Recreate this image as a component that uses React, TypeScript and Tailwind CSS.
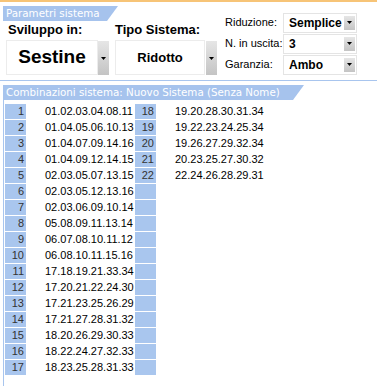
import React from 'react';

const rows: { n: number; combo: string; n2?: number; combo2?: string }[] = [
  { n: 1, combo: '01.02.03.04.08.11', n2: 18, combo2: '19.20.28.30.31.34' },
  { n: 2, combo: '01.04.05.06.10.13', n2: 19, combo2: '19.22.23.24.25.34' },
  { n: 3, combo: '01.04.07.09.14.16', n2: 20, combo2: '19.26.27.29.32.34' },
  { n: 4, combo: '01.04.09.12.14.15', n2: 21, combo2: '20.23.25.27.30.32' },
  { n: 5, combo: '02.03.05.07.13.15', n2: 22, combo2: '22.24.26.28.29.31' },
  { n: 6, combo: '02.03.05.12.13.16' },
  { n: 7, combo: '02.03.06.09.10.14' },
  { n: 8, combo: '05.08.09.11.13.14' },
  { n: 9, combo: '06.07.08.10.11.12' },
  { n: 10, combo: '06.08.10.11.15.16' },
  { n: 11, combo: '17.18.19.21.33.34' },
  { n: 12, combo: '17.20.21.22.24.30' },
  { n: 13, combo: '17.21.23.25.26.29' },
  { n: 14, combo: '17.21.27.28.31.32' },
  { n: 15, combo: '18.20.26.29.30.33' },
  { n: 16, combo: '18.22.24.27.32.33' },
  { n: 17, combo: '18.23.25.28.31.33' },
];

const DropButton: React.FC<{ className?: string }> = ({ className = '' }) => (
  <div
    className={`flex items-center justify-center bg-gradient-to-b from-[#e6e6e6] to-[#c4c4c4] ${className}`}
  >
    <svg width="5" height="3" viewBox="0 0 5 3">
      <path d="M0 0h5L2.5 3z" fill="#000" />
    </svg>
  </div>
);

const Tab: React.FC<{ label: string; width: string }> = ({ label, width }) => (
  <div
    className={`${width} h-[15px] bg-[#a6c3ed] text-white text-[10.3px] leading-[15px] pl-[3px] whitespace-nowrap [clip-path:polygon(0_0,100%_0,calc(100%-11px)_100%,0_100%)]`}
    style={{ fontFamily: '"DejaVu Sans", Verdana, sans-serif' }}
  >
    {label}
  </div>
);

const SmallCombo: React.FC<{ label: string; value: string }> = ({ label, value }) => (
  <div className="flex items-center h-[21px]">
    <div className="w-[58px] text-[11px] text-black">{label}</div>
    <div className="flex h-[20px] w-[74px] border border-[#e4e4e4]">
      <div className="flex-1 pl-[5px] text-[12px] font-bold leading-[18px]">{value}</div>
      <DropButton className="w-[11px] my-[2px] mr-[1px]" />
    </div>
  </div>
);

export default function App() {
  return (
    <div
      className="w-[377px] h-[386px] bg-white overflow-hidden text-black"
      style={{ fontFamily: '"Liberation Sans", Arial, sans-serif' }}
    >
      <div className="h-[2px] bg-[#f7c477]" />

      {/* Parametri sistema */}
      <div className="flex h-[78px]">
        <div className="w-[222px] pl-[3px] pt-[4px]">
          <Tab label="Parametri sistema" width="w-[115px]" />
          <div className="flex pt-[1px]">
            <div className="w-[109px] pl-[3px]">
              <div className="pl-[2px] text-[13px] font-bold leading-[16px]">Sviluppo in:</div>
              <div className="flex h-[35px] mt-[2px]">
                <div className="w-[92px] border border-[#ececec] flex items-center justify-center text-[19px] font-bold">
                  Sestine
                </div>
                <DropButton className="w-[11px] mt-[1px]" />
              </div>
            </div>
            <div className="pl-[3px]">
              <div className="text-[13px] font-bold leading-[16px]">Tipo Sistema:</div>
              <div className="flex h-[35px] mt-[2px]">
                <div className="w-[90px] border border-[#ececec] flex items-center justify-center text-[13px] font-bold">
                  Ridotto
                </div>
                <DropButton className="w-[11px] mt-[1px] ml-[1px]" />
              </div>
            </div>
          </div>
        </div>
        <div className="pt-[10px] pl-[3px]">
          <SmallCombo label="Riduzione:" value="Semplice" />
          <SmallCombo label="N. in uscita:" value="3" />
          <SmallCombo label="Garanzia:" value="Ambo" />
        </div>
      </div>

      <div className="h-[1px] bg-[#a8c5ee]" />

      {/* Combinazioni */}
      <div className="pl-[3px] pt-[4px]">
        <Tab label="Combinazioni sistema: Nuovo Sistema (Senza Nome)" width="w-[301px]" />
        <div className="border-l border-[#a8c5ee] h-[290px] pt-[4px]">
          {rows.map((r) => (
            <div key={r.n} className="flex h-[16px] text-[11px] leading-[15px]">
              <div className="ml-[1px] w-[21px] h-[15px] bg-[#a9c6ee] text-right pr-[2px] text-[#333]">
                {r.n}
              </div>
              <div className="w-[109px] pl-[19px]">{r.combo}</div>
              <div className="w-[21px] h-[15px] bg-[#a9c6ee] text-right pr-[2px] text-[#333]">
                {r.n2 ?? ''}
              </div>
              <div className="pl-[19px]">{r.combo2 ?? ''}</div>
            </div>
          ))}
        </div>
      </div>
    </div>
  );
}
